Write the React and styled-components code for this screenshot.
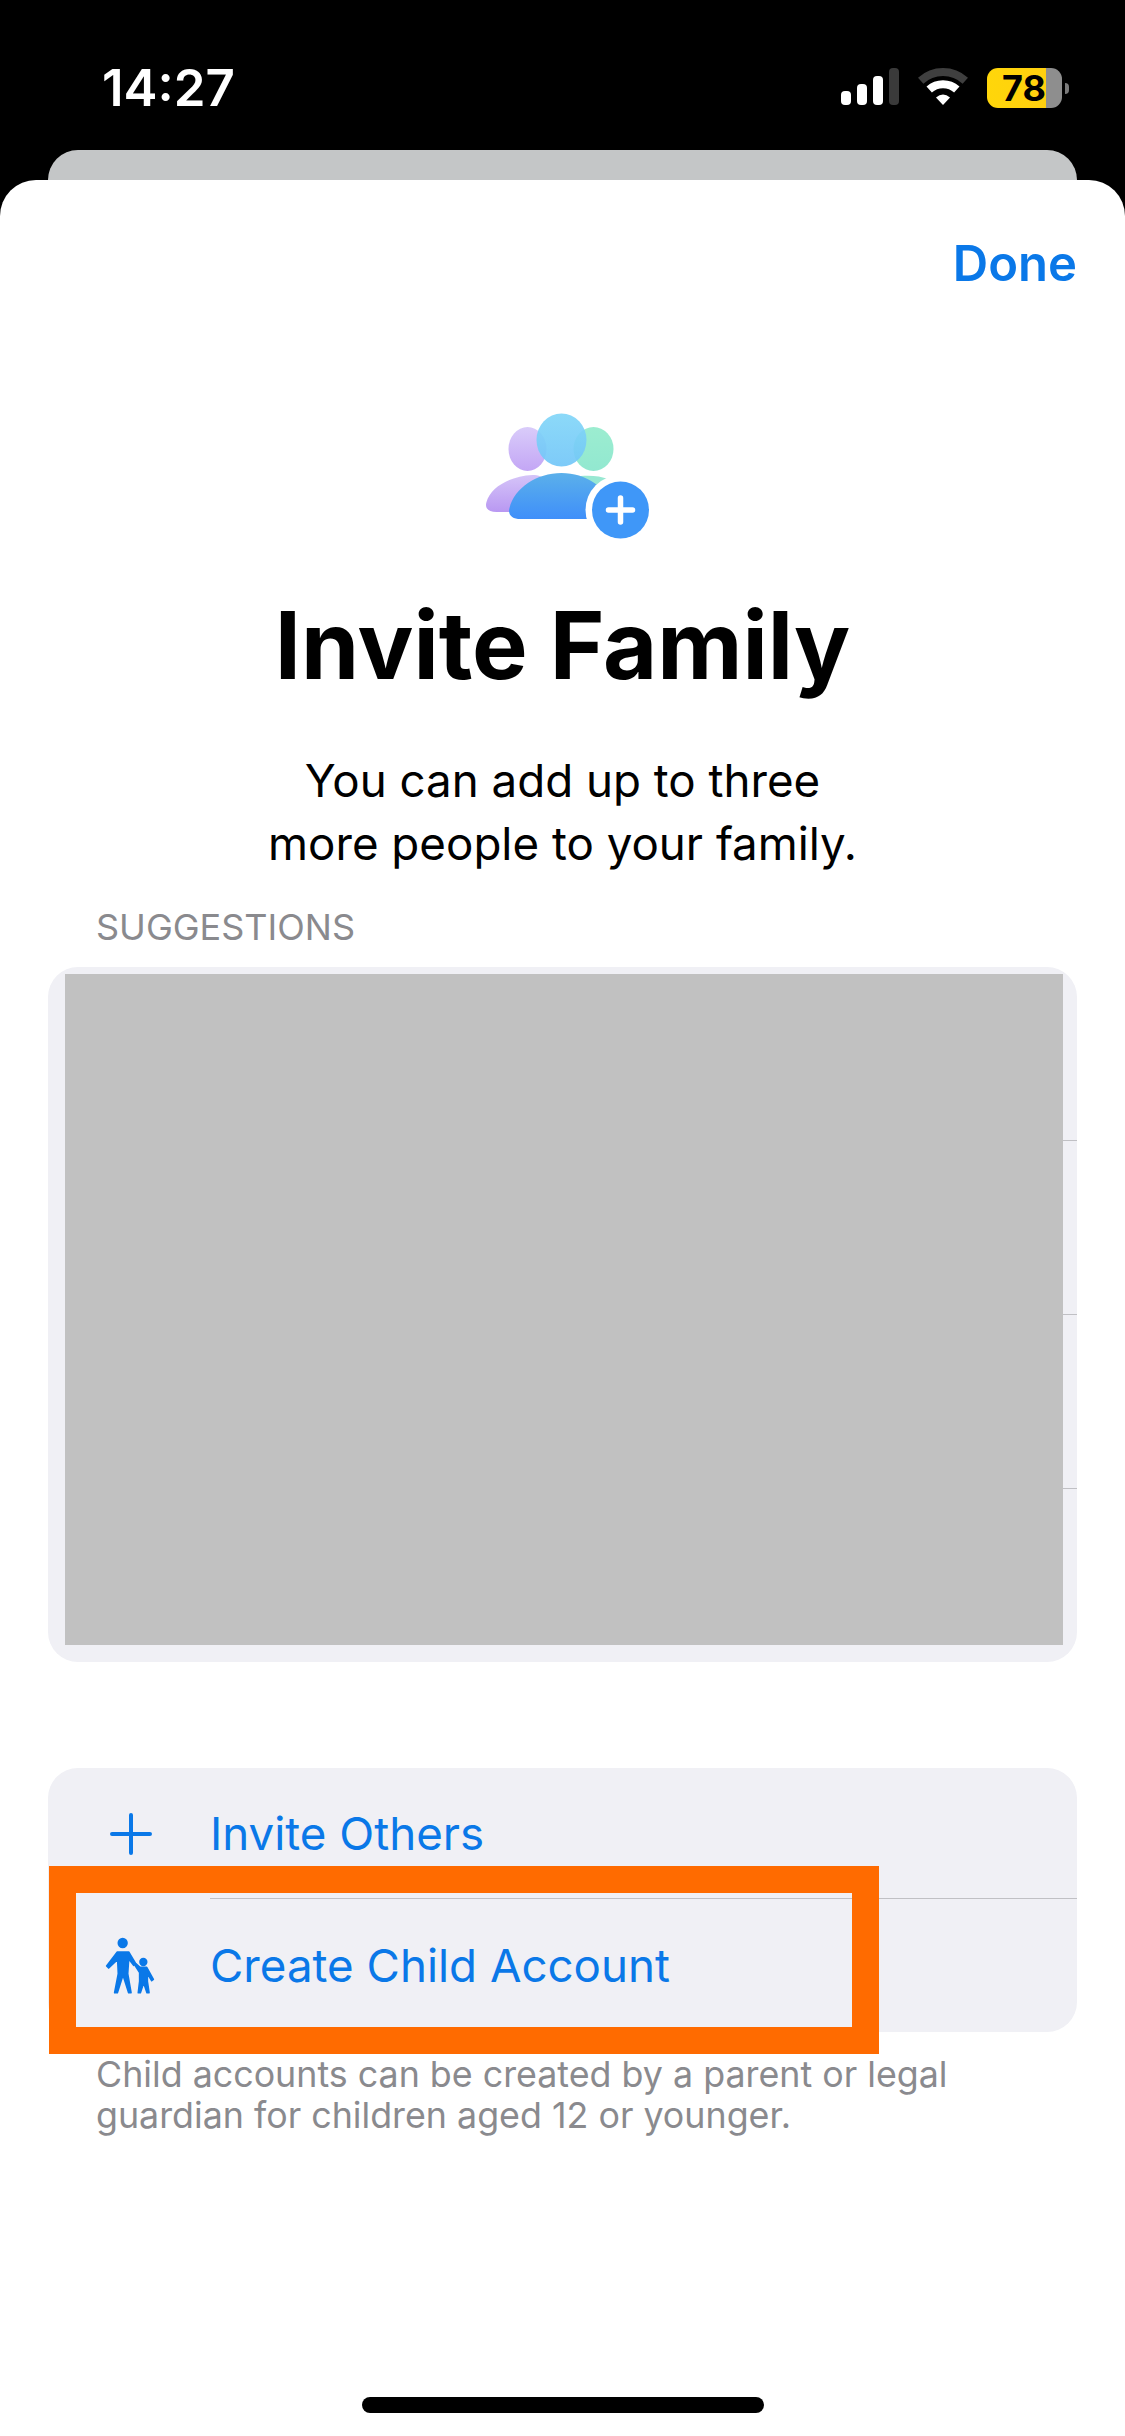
import React from "react";
import styled, { createGlobalStyle } from "styled-components";

const Reset = createGlobalStyle`
    html, body {
        margin: 0;
        padding: 0;
        background: #000;
    }
    * {
        box-sizing: border-box;
    }
`;

const Page = styled.div`
    width: 1125px;
    height: 2436px;
    overflow: hidden;
    display: flex;
    flex-direction: column;
    background: #000;
    font-family: Inter, "Liberation Sans", sans-serif;
`;

const StatusBar = styled.div`
    height: 150px;
    flex: none;
    display: flex;
    justify-content: space-between;
    padding: 62px 63px 0 102px;
    color: #fff;
`;

const Clock = styled.div`
    font-size: 51px;
    font-weight: 600;
    line-height: 52px;
`;

const StatusIcons = styled.div`
    display: flex;
    align-items: flex-start;
    gap: 19px;
    padding-top: 6px;
`;

const Battery = styled.div`
    position: relative;
    width: 75px;
    height: 40px;
    border-radius: 11px;
    overflow: visible;
    background: linear-gradient(to right, #ffd60a 0, #ffd00f 59px, #8e8e8e 59px);
    color: #000;
    font-size: 36px;
    font-weight: 700;
    line-height: 40px;
    padding-left: 15px;
    &::after {
        content: "";
        position: absolute;
        left: 78px;
        top: 15px;
        width: 4px;
        height: 11px;
        border-radius: 0 6px 6px 0;
        background: #7a7a7a;
    }
`;

const BackSheet = styled.div`
    height: 30px;
    flex: none;
    margin: 0 48px;
    background: #c4c6c7;
    border-radius: 30px 30px 0 0;
`;

const Sheet = styled.div`
    flex: 1;
    display: flex;
    flex-direction: column;
    background: #fff;
    border-radius: 36px 36px 0 0;
    position: relative;
`;

const TopBar = styled.div`
    display: flex;
    justify-content: flex-end;
    padding: 54px 48px 0;
    color: #0a78e8;
    font-size: 49px;
    font-weight: 600;
    line-height: 60px;
`;

const Hero = styled.svg`
    display: block;
    align-self: center;
    margin-top: 96px;
`;

const Title = styled.h1`
    margin: 26px 0 0;
    text-align: center;
    color: #000;
    font-size: 93.4px;
    font-weight: 700;
    line-height: 120px;
`;

const Lead = styled.p`
    margin: 43px 0 0;
    text-align: center;
    color: #000;
    font-size: 45.7px;
    line-height: 63px;
`;

const SectionLabel = styled.div`
    margin: 30px 0 0 96px;
    color: #8a8a8e;
    font-size: 36px;
    line-height: 44px;
`;

const Group = styled.div`
    position: relative;
    margin: ${(p) => p.$top}px 48px 0;
    background: #f0f0f5;
    border-radius: 30px;
`;

const SuggestionRow = styled.div`
    height: ${(p) => (p.$last ? 173 : 174)}px;
    border-bottom: ${(p) => (p.$last ? "none" : "1px solid #c0c0c4")};
    margin-left: 160px;
`;

const Redaction = styled.div`
    position: absolute;
    left: 17px;
    right: 14px;
    top: 7px;
    bottom: 17px;
    background: #c1c1c1;
`;

const ActionRow = styled.div`
    display: flex;
    align-items: stretch;
    height: ${(p) => p.$height}px;
    color: #0a78e8;
    font-size: 45.7px;
`;

const ActionIcon = styled.div`
    flex: none;
    width: 162px;
    display: flex;
    align-items: center;
    padding-left: ${(p) => p.$pad}px;
`;

const ActionLabel = styled.div`
    flex: 1;
    display: flex;
    align-items: center;
    border-bottom: ${(p) => (p.$divider ? "1px solid #c0c0c4" : "none")};
`;

const Highlight = styled.div`
    position: absolute;
    left: 1px;
    top: 98px;
    width: 830px;
    height: 188px;
    border: 27px solid #ff6b00;
`;

const Footnote = styled.p`
    margin: 22px 96px 0;
    color: #8a8a8e;
    font-size: 35.8px;
    line-height: 41px;
`;

const HomeIndicator = styled.div`
    position: absolute;
    left: 362px;
    bottom: 23px;
    width: 402px;
    height: 16px;
    border-radius: 8px;
    background: #000;
`;

const SignalIcon = () => (
    <svg width="58" height="37" viewBox="0 0 58 37">
        <rect x="0" y="23" width="10" height="14" rx="4" fill="#fff" />
        <rect x="16" y="16" width="10" height="21" rx="4" fill="#fff" />
        <rect x="32" y="8" width="10" height="29" rx="4" fill="#fff" />
        <rect x="48" y="0" width="10" height="37" rx="4" fill="#3a3a3a" />
    </svg>
);

const WifiIcon = () => (
    <svg width="50" height="37" viewBox="0 0 50 37">
        <path d="M2.7 12.7A33 33 0 0 1 47.3 12.7" fill="none" stroke="#3f3f3f" strokeWidth="8" />
        <path d="M11.2 21.5A20.5 20.5 0 0 1 38.8 21.5" fill="none" stroke="#fff" strokeWidth="8" />
        <path d="M18 29.5Q25 23.5 32 29.5L25 37Z" fill="#fff" />
    </svg>
);

const FamilyIcon = () => (
    <Hero width="240" height="170" viewBox="2.5 0 240 170">
        <defs>
            <linearGradient id="purpleHead" x1="0" y1="0" x2="0" y2="1">
                <stop offset="0" stopColor="#d9ccfa" />
                <stop offset="1" stopColor="#c3a6f5" />
            </linearGradient>
            <linearGradient id="purpleBody" x1="0" y1="0" x2="0" y2="1">
                <stop offset="0" stopColor="#d5c4f8" />
                <stop offset="1" stopColor="#b998f2" />
            </linearGradient>
            <linearGradient id="greenHead" x1="0" y1="0" x2="0" y2="1">
                <stop offset="0" stopColor="#9cedd0" />
                <stop offset="1" stopColor="#92e8d0" />
            </linearGradient>
            <linearGradient id="blueHead" x1="0" y1="0" x2="0" y2="1">
                <stop offset="0" stopColor="#82d6f8" />
                <stop offset="1" stopColor="#72c6f8" />
            </linearGradient>
            <linearGradient id="blueBody" x1="0" y1="0" x2="0" y2="1">
                <stop offset="0" stopColor="#5bb0ea" />
                <stop offset="1" stopColor="#3f8ffa" />
            </linearGradient>
        </defs>
        <ellipse cx="87" cy="59" rx="19" ry="22" fill="url(#purpleHead)" />
        <ellipse cx="153" cy="59" rx="20" ry="22" fill="url(#greenHead)" />
        <ellipse cx="121" cy="50" rx="25" ry="26.5" fill="url(#blueHead)" opacity="0.92" />
        <path d="M46 112C50 97 70 86 92 85C104 85 112 92 112 112V122H56C48 122 44 118 46 112Z" fill="url(#purpleBody)" />
        <path d="M140 86C150 85 160 86 168 89L150 110Z" fill="#98e8d2" />
        <path d="M69 118C74 98 96 83 121 83C146 83 168 98 175 122L146 129H80C72 129 67 125 69 118Z" fill="url(#blueBody)" />
        <circle cx="180" cy="120" r="35" fill="#fff" />
        <circle cx="180" cy="120" r="28.5" fill="#3f97f8" />
        <path d="M180 108V132M168 120H192" stroke="#fff" strokeWidth="5.5" strokeLinecap="round" />
    </Hero>
);

const PlusIcon = () => (
    <svg width="42" height="42" viewBox="0 0 42 42">
        <path d="M21 2V40M2 21H40" stroke="#0a78e8" strokeWidth="4" strokeLinecap="round" />
    </svg>
);

const ChildIcon = () => (
    <svg width="60" height="68" viewBox="0 0 180 204">
        <g fill="#0a78e8" stroke="#0a78e8" strokeWidth="5" strokeLinejoin="round">
            <circle cx="68" cy="33" r="13" />
            <circle cx="130" cy="90" r="10" />
            <path d="M52 60H86L107 95L101 100L86 80L83 125L93 182H86L70 132H68L52 182H44L55 125L53 82L26 108L20 102Z" />
            <path d="M120 106H140L160 142L155 146L142 125V148L147 182H141L131 152L121 182H115L119 148V122L105 100L109 96Z" />
        </g>
    </svg>
);

export default function App() {
    return (
        <Page>
            <Reset />
            <StatusBar>
                <Clock>14:27</Clock>
                <StatusIcons>
                    <SignalIcon />
                    <WifiIcon />
                    <Battery>78</Battery>
                </StatusIcons>
            </StatusBar>
            <BackSheet />
            <Sheet>
                <TopBar>Done</TopBar>
                <FamilyIcon />
                <Title>Invite Family</Title>
                <Lead>
                    You can add up to three
                    <br />
                    more people to your family.
                </Lead>
                <SectionLabel>SUGGESTIONS</SectionLabel>
                <Group $top={18}>
                    <SuggestionRow />
                    <SuggestionRow />
                    <SuggestionRow />
                    <SuggestionRow $last />
                    <Redaction />
                </Group>
                <Group $top={106}>
                    <ActionRow $height={131}>
                        <ActionIcon $pad={62}>
                            <PlusIcon />
                        </ActionIcon>
                        <ActionLabel $divider>Invite Others</ActionLabel>
                    </ActionRow>
                    <ActionRow $height={133}>
                        <ActionIcon $pad={52}>
                            <ChildIcon />
                        </ActionIcon>
                        <ActionLabel>Create Child Account</ActionLabel>
                    </ActionRow>
                    <Highlight />
                </Group>
                <Footnote>
                    Child accounts can be created by a parent or legal guardian for children aged 12 or younger.
                </Footnote>
                <HomeIndicator />
            </Sheet>
        </Page>
    );
}
